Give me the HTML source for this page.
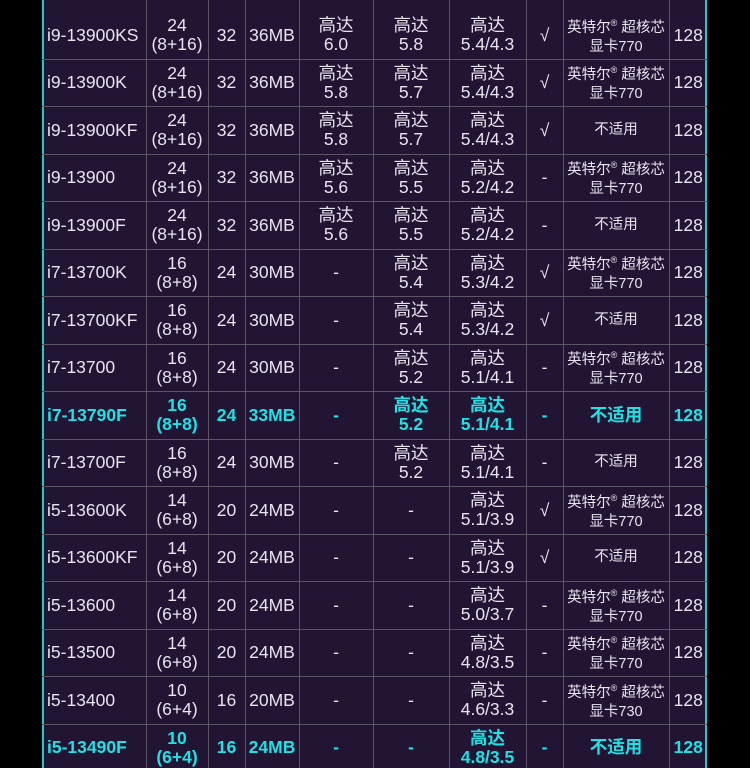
<!DOCTYPE html><html><head><meta charset="utf-8"><style>
html,body{margin:0;background:#000;width:750px;height:768px;overflow:hidden;}
body{position:relative;font-family:"Liberation Sans","Noto Sans CJK SC",sans-serif;}
.wrap{position:absolute;left:42px;top:-2px;width:665px;height:780px;background:#221533;border-left:2px solid #1fc9cc;border-right:2px solid #1fc9cc;border-top:2px solid #1fc9cc;box-sizing:border-box}
table{position:absolute;left:42px;top:0;border-collapse:collapse;table-layout:fixed;width:665px;color:#e8e4ee;font-size:17.5px;}
td{border:1px solid #5b5566;height:46.5px;padding:0;text-align:center;line-height:19px;vertical-align:middle;white-space:nowrap;overflow:hidden}
tr:first-child td{border-top:none;padding-top:12px;height:46.5px}
td:first-child{text-align:left;padding-left:5px;border-left:none}
td:last-child{border-right:none}
tr.h td{color:#1ee3e6;font-weight:bold}
.s{font-size:14.5px}
sup{font-size:9px;vertical-align:6px}
</style></head><body>
<div class="wrap"></div>
<table>
<colgroup><col style="width:104px"><col style="width:62px"><col style="width:37px"><col style="width:54px"><col style="width:74px"><col style="width:76px"><col style="width:77px"><col style="width:37px"><col style="width:106px"><col style="width:38px"></colgroup>
<tr><td>i9-13900KS</td><td>24<br>(8+16)</td><td>32</td><td>36MB</td><td>高达<br>6.0</td><td>高达<br>5.8</td><td>高达<br>5.4/4.3</td><td>√</td><td class="s">英特尔<sup>®</sup> 超核芯<br>显卡770</td><td>128</td></tr>
<tr><td>i9-13900K</td><td>24<br>(8+16)</td><td>32</td><td>36MB</td><td>高达<br>5.8</td><td>高达<br>5.7</td><td>高达<br>5.4/4.3</td><td>√</td><td class="s">英特尔<sup>®</sup> 超核芯<br>显卡770</td><td>128</td></tr>
<tr><td>i9-13900KF</td><td>24<br>(8+16)</td><td>32</td><td>36MB</td><td>高达<br>5.8</td><td>高达<br>5.7</td><td>高达<br>5.4/4.3</td><td>√</td><td class="s">不适用</td><td>128</td></tr>
<tr><td>i9-13900</td><td>24<br>(8+16)</td><td>32</td><td>36MB</td><td>高达<br>5.6</td><td>高达<br>5.5</td><td>高达<br>5.2/4.2</td><td>-</td><td class="s">英特尔<sup>®</sup> 超核芯<br>显卡770</td><td>128</td></tr>
<tr><td>i9-13900F</td><td>24<br>(8+16)</td><td>32</td><td>36MB</td><td>高达<br>5.6</td><td>高达<br>5.5</td><td>高达<br>5.2/4.2</td><td>-</td><td class="s">不适用</td><td>128</td></tr>
<tr><td>i7-13700K</td><td>16<br>(8+8)</td><td>24</td><td>30MB</td><td>-</td><td>高达<br>5.4</td><td>高达<br>5.3/4.2</td><td>√</td><td class="s">英特尔<sup>®</sup> 超核芯<br>显卡770</td><td>128</td></tr>
<tr><td>i7-13700KF</td><td>16<br>(8+8)</td><td>24</td><td>30MB</td><td>-</td><td>高达<br>5.4</td><td>高达<br>5.3/4.2</td><td>√</td><td class="s">不适用</td><td>128</td></tr>
<tr><td>i7-13700</td><td>16<br>(8+8)</td><td>24</td><td>30MB</td><td>-</td><td>高达<br>5.2</td><td>高达<br>5.1/4.1</td><td>-</td><td class="s">英特尔<sup>®</sup> 超核芯<br>显卡770</td><td>128</td></tr>
<tr class="h"><td>i7-13790F</td><td>16<br>(8+8)</td><td>24</td><td>33MB</td><td>-</td><td>高达<br>5.2</td><td>高达<br>5.1/4.1</td><td>-</td><td>不适用</td><td>128</td></tr>
<tr><td>i7-13700F</td><td>16<br>(8+8)</td><td>24</td><td>30MB</td><td>-</td><td>高达<br>5.2</td><td>高达<br>5.1/4.1</td><td>-</td><td class="s">不适用</td><td>128</td></tr>
<tr><td>i5-13600K</td><td>14<br>(6+8)</td><td>20</td><td>24MB</td><td>-</td><td>-</td><td>高达<br>5.1/3.9</td><td>√</td><td class="s">英特尔<sup>®</sup> 超核芯<br>显卡770</td><td>128</td></tr>
<tr><td>i5-13600KF</td><td>14<br>(6+8)</td><td>20</td><td>24MB</td><td>-</td><td>-</td><td>高达<br>5.1/3.9</td><td>√</td><td class="s">不适用</td><td>128</td></tr>
<tr><td>i5-13600</td><td>14<br>(6+8)</td><td>20</td><td>24MB</td><td>-</td><td>-</td><td>高达<br>5.0/3.7</td><td>-</td><td class="s">英特尔<sup>®</sup> 超核芯<br>显卡770</td><td>128</td></tr>
<tr><td>i5-13500</td><td>14<br>(6+8)</td><td>20</td><td>24MB</td><td>-</td><td>-</td><td>高达<br>4.8/3.5</td><td>-</td><td class="s">英特尔<sup>®</sup> 超核芯<br>显卡770</td><td>128</td></tr>
<tr><td>i5-13400</td><td>10<br>(6+4)</td><td>16</td><td>20MB</td><td>-</td><td>-</td><td>高达<br>4.6/3.3</td><td>-</td><td class="s">英特尔<sup>®</sup> 超核芯<br>显卡730</td><td>128</td></tr>
<tr class="h"><td>i5-13490F</td><td>10<br>(6+4)</td><td>16</td><td>24MB</td><td>-</td><td>-</td><td>高达<br>4.8/3.5</td><td>-</td><td>不适用</td><td>128</td></tr>
</table>
</body></html>
